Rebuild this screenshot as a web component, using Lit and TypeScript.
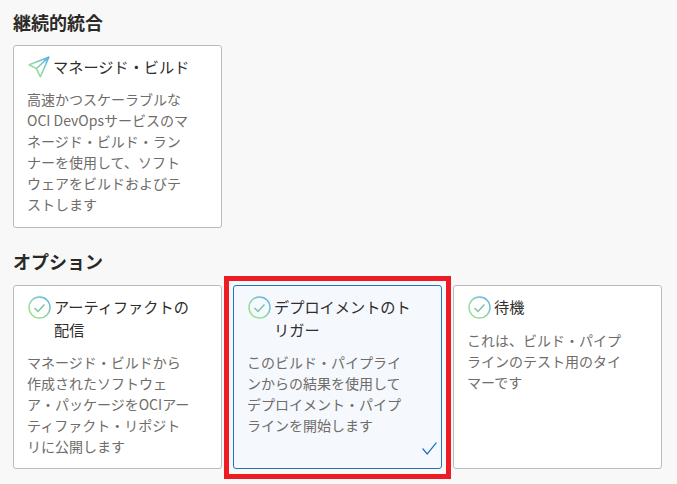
import { LitElement, html, css, svg } from "lit";
import { customElement } from "lit/decorators.js";

const defs = svg`<defs><linearGradient id="g" x1="0" y1="1" x2="1" y2="0">
<stop offset="0" stop-color="#a8e488"/><stop offset="0.5" stop-color="#8ed4ae"/><stop offset="1" stop-color="#55aef0"/></linearGradient></defs>`;

const planeIcon = html`<svg class="icon" width="22" height="22" viewBox="0 0 22 22" fill="none">${defs}
<path d="M20.8 1.2 L1.2 8.8 L8.4 12.6 L12.4 20.8 Z M20.8 1.2 L8.4 12.6" stroke="url(#g)" stroke-width="1.6" stroke-linejoin="round"/></svg>`;

const checkIcon = html`<svg class="icon" width="23" height="23" viewBox="0 0 23 23" fill="none">${defs}
<circle cx="11.5" cy="11.5" r="10.5" stroke="url(#g)" stroke-width="1.5"/>
<path d="M6.5 12 L10 15.5 L16.5 8.5" stroke="#7fc4a0" stroke-width="1.5" fill="none"/></svg>`;

@customElement("app-root")
export class AppRoot extends LitElement {
  static styles = css`
    :host { display: block; width: 677px; height: 484px; overflow: hidden; background: #f8f8f8; box-sizing: border-box; padding: 11px 13px 0;
      font-family: "Noto Sans CJK JP", "Noto Sans", sans-serif; }
    h2 { margin: 0; font-size: 18px; line-height: 22px; font-weight: 700; color: #2b2926; }
    .row { display: flex; gap: 11px; margin-top: 12px; }
    .second { margin-top: 22px; }
    .second + .row { margin-top: 13px; }
    .card { box-sizing: border-box; width: 209px; background: #fff; border: 1px solid #b9bac4; border-radius: 3px; padding: 9px 13px 0; }
    .first { height: 183px; }
    .opt { height: 184px; padding-top: 9px; }
    .sel { position: relative; background: #f5f8fd; border-color: #1f74c0; }
    .sel::after { content: ""; position: absolute; inset: -10px -10px -11px -10px; border: 5px solid #ed1c24; pointer-events: none; }
    .head { display: flex; align-items: flex-start; gap: 3px; font-size: 15.2px; line-height: 23px; color: #312d2a; }
    .icon { flex: none; margin: 1px 0 0 1px; }
    p { margin: 11px 0 0; font-size: 14px; line-height: 21px; color: #6f6c69; white-space: nowrap; }
    .tick { position: absolute; right: 4px; bottom: 13px; }
  `;

  card(icon: unknown, title: string[], lines: string[], cls: string, sel = false) {
    return html`<div class="card ${cls} ${sel ? "sel" : ""}">
      <div class="head">${icon}<div>${title.map((t) => html`${t}<br />`)}</div></div>
      <p>${lines.map((l) => html`${l}<br />`)}</p>
      ${sel
        ? html`<svg class="tick" width="15" height="13" viewBox="0 0 15 13" fill="none"><path d="M0.6 6.5 L5.2 12 L14.4 0.6" stroke="#1f74c0" stroke-width="1.2"/></svg>`
        : ""}
    </div>`;
  }

  render() {
    return html`
      <h2>継続的統合</h2>
      <div class="row">
        ${this.card(planeIcon, ["マネージド・ビルド"], ["高速かつスケーラブルな", "OCI DevOpsサービスのマ", "ネージド・ビルド・ラン", "ナーを使用して、ソフト", "ウェアをビルドおよびテ", "ストします"], "first")}
      </div>
      <h2 class="second">オプション</h2>
      <div class="row">
        ${this.card(checkIcon, ["アーティファクトの", "配信"], ["マネージド・ビルドから", "作成されたソフトウェ", "ア・パッケージをOCIアー", "ティファクト・リポジト", "リに公開します"], "opt")}
        ${this.card(checkIcon, ["デプロイメントのト", "リガー"], ["このビルド・パイプライ", "ンからの結果を使用して", "デプロイメント・パイプ", "ラインを開始します"], "opt", true)}
        ${this.card(checkIcon, ["待機"], ["これは、ビルド・パイプ", "ラインのテスト用のタイ", "マーです"], "opt")}
      </div>
    `;
  }
}
